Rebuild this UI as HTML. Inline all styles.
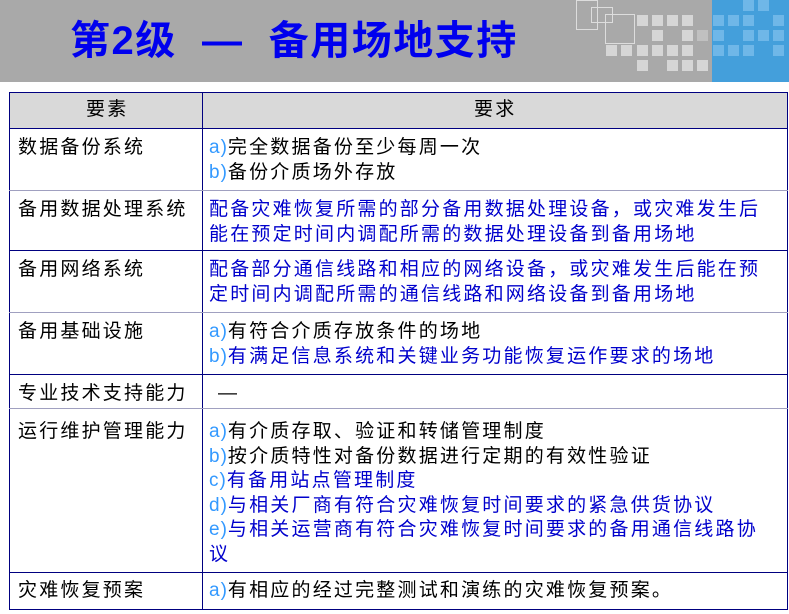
<!DOCTYPE html><html><head><meta charset="utf-8"><style>
body{margin:0;width:789px;height:614px;background:#fff;position:relative;overflow:hidden;font-family:"Liberation Sans","Noto Sans CJK SC",sans-serif}
.hd{position:absolute;left:0;top:0;width:789px;height:82px;background:#a9a9a9}
.bl{position:absolute;left:712px;top:0;width:77px;height:82px;background:#449fdb}
.sq{position:absolute;width:11px;height:11px;background:#d6d6d6}
.sb{position:absolute;width:11px;height:11px;background:#6fb7e8}
.title{position:absolute;left:70px;top:8px;font-size:40px;font-weight:bold;color:#0000ee;letter-spacing:1.5px;white-space:nowrap}
.t{position:absolute;font-size:19px;line-height:24.5px;white-space:nowrap;color:#000;letter-spacing:2.2px}
.b{color:#0000cc}.l{color:#3399ff;letter-spacing:1px}
.hl{position:absolute;left:9px;width:779px;height:1px;background:#a0a0c0}
</style></head><body>
<div class="hd"></div><div class="bl"></div>
<div style="position:absolute;left:576px;top:0;width:20px;height:28px;border:1px solid #ddd"></div>
<div style="position:absolute;left:591px;top:7px;width:20px;height:14px;border:1px solid #ddd"></div>
<div style="position:absolute;left:605px;top:14px;width:28px;height:28px;border:1px solid #ddd"></div>
<div class="sq" style="left:637px;top:15px"></div><div class="sq" style="left:652px;top:15px"></div><div class="sq" style="left:667px;top:15px"></div><div class="sq" style="left:682px;top:15px"></div>
<div class="sq" style="left:652px;top:30px"></div><div class="sq" style="left:682px;top:30px"></div><div class="sq" style="left:697px;top:30px;background:#c0c0c0"></div>
<div class="sq" style="left:606px;top:45px"></div><div class="sq" style="left:621px;top:45px"></div><div class="sq" style="left:637px;top:45px"></div><div class="sq" style="left:652px;top:45px"></div><div class="sq" style="left:667px;top:45px"></div><div class="sq" style="left:682px;top:45px"></div>
<div class="sq" style="left:637px;top:60px"></div><div class="sq" style="left:667px;top:60px"></div><div class="sq" style="left:682px;top:60px"></div><div class="sq" style="left:697px;top:60px"></div>
<div class="sb" style="left:743px;top:0"></div><div class="sb" style="left:758px;top:0"></div>
<div class="sb" style="left:713px;top:15px"></div><div class="sb" style="left:728px;top:15px"></div><div class="sb" style="left:743px;top:15px"></div><div class="sb" style="left:773px;top:15px"></div>
<div class="sb" style="left:713px;top:30px"></div><div class="sb" style="left:743px;top:30px"></div><div class="sb" style="left:758px;top:30px"></div><div class="sb" style="left:773px;top:30px"></div>
<div class="sb" style="left:713px;top:45px"></div><div class="sb" style="left:728px;top:45px"></div><div class="sb" style="left:743px;top:45px"></div><div class="sb" style="left:773px;top:45px"></div>
<div class="title">第2级&nbsp; —&nbsp; 备用场地支持</div>
<div style="position:absolute;left:9px;top:92px;width:777px;height:516px;border:1px solid #000080"></div>
<div style="position:absolute;left:10px;top:93px;width:777px;height:35px;background:#d9d9d9"></div>
<div style="position:absolute;left:202px;top:92px;width:1px;height:517px;background:#000080"></div>
<div class="hl" style="top:128px;background:#000080"></div>
<div class="hl" style="top:190px"></div><div class="hl" style="top:250px;background:#000080"></div><div class="hl" style="top:312px"></div><div class="hl" style="top:374px;background:#000080"></div><div class="hl" style="top:408px;background:#a0a0c0"></div><div class="hl" style="top:572px;background:#000080"></div>
<div class="t" style="left:86px;top:98px">要素</div>
<div class="t" style="left:474px;top:98px">要求</div>
<div class="t" style="left:18px;top:136px">数据备份系统</div>
<div class="t" style="left:209px;top:136px"><span class="l">a)</span>完全数据备份至少每周一次<br><span class="l">b)</span>备份介质场外存放</div>
<div class="t" style="left:18px;top:198px">备用数据处理系统</div>
<div class="t b" style="left:209px;top:198px">配备灾难恢复所需的部分备用数据处理设备，或灾难发生后<br>能在预定时间内调配所需的数据处理设备到备用场地</div>
<div class="t" style="left:18px;top:258px">备用网络系统</div>
<div class="t b" style="left:209px;top:258px">配备部分通信线路和相应的网络设备，或灾难发生后能在预<br>定时间内调配所需的通信线路和网络设备到备用场地</div>
<div class="t" style="left:18px;top:320px">备用基础设施</div>
<div class="t" style="left:209px;top:320px"><span class="l">a)</span>有符合介质存放条件的场地<br><span class="b"><span class="l">b)</span>有满足信息系统和关键业务功能恢复运作要求的场地</span></div>
<div class="t" style="left:18px;top:382px">专业技术支持能力</div>
<div class="t" style="left:218px;top:382px">—</div>
<div class="t" style="left:18px;top:420px">运行维护管理能力</div>
<div class="t" style="left:209px;top:420px"><span class="l">a)</span>有介质存取、验证和转储管理制度<br><span class="l">b)</span>按介质特性对备份数据进行定期的有效性验证<br><span class="b"><span class="l">c)</span>有备用站点管理制度<br><span class="l">d)</span>与相关厂商有符合灾难恢复时间要求的紧急供货协议<br><span class="l">e)</span>与相关运营商有符合灾难恢复时间要求的备用通信线路协<br>议</span></div>
<div class="t" style="left:18px;top:579px">灾难恢复预案</div>
<div class="t" style="left:209px;top:579px"><span class="l">a)</span>有相应的经过完整测试和演练的灾难恢复预案。</div>
</body></html>
